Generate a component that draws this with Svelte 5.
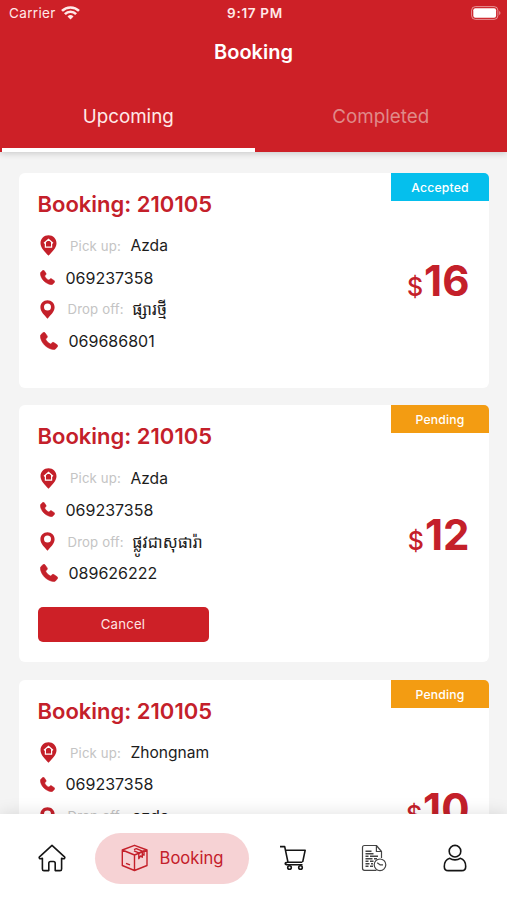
<script lang="ts">
	// Types/constants
	type Booking = {
		id: string
		status: 'Accepted' | 'Pending'
		pickUp: string
		pickUpPhone: string
		dropOff: string
		dropOffPhone: string
		price: number
		canCancel: boolean
	}

	const bookings: Booking[] = [
		{
			id: '210105',
			status: 'Accepted',
			pickUp: 'Azda',
			pickUpPhone: '069237358',
			dropOff: 'ផ្សារថ្មី',
			dropOffPhone: '069686801',
			price: 16,
			canCancel: false,
		},
		{
			id: '210105',
			status: 'Pending',
			pickUp: 'Azda',
			pickUpPhone: '069237358',
			dropOff: 'ផ្លូវជាសុផារ៉ា',
			dropOffPhone: '089626222',
			price: 12,
			canCancel: true,
		},
		{
			id: '210105',
			status: 'Pending',
			pickUp: 'Zhongnam',
			pickUpPhone: '069237358',
			dropOff: 'azda',
			dropOffPhone: '069686801',
			price: 10,
			canCancel: true,
		},
	]

	const tabs = ['Upcoming', 'Completed']


	// State
	let activeTab = $state('Upcoming')
</script>


{#snippet phoneIcon(size: number)}
	<svg class="icon phone" width={size} height={size} viewBox="0 0 16 16" aria-hidden="true">
		<path d="M.9 2.300 2.800.500c.5-.4 1.200-.4 1.600.1l2 2.900c.3.500.2 1.100-.2 1.500L5 6.300c.8 1.900 2.300 3.500 4.500 4.400l1.300-1.200c.5-.4 1-.4 1.500-.1l3 2c.5.400.6 1.100.2 1.600l-1.700 2c-.5.500-1.200.7-2 .6C5.900 14.700 1.100 9.900.3 4c0-.7.1-1.300.6-1.700Z" />
	</svg>
{/snippet}


<div class="screen">
	<header>
		<div class="status-bar">
			<span class="carrier">
				Carrier
				<svg width="19" height="14" viewBox="0 0 19 14" aria-hidden="true">
					<g fill="none" stroke="currentColor" stroke-width="2.6">
						<path d="M1 4.900a12.200 12.200 0 0 1 17 0" />
						<path d="M3.900 8.100a8 8 0 0 1 11.200 0" />
					</g>
					<path fill="currentColor" d="M6.500 10.400a4.300 4.300 0 0 1 6 0L9.500 13.500Z" />
				</svg>
			</span>
			<span class="time">9:17 PM</span>
			<svg class="battery" width="30" height="14" viewBox="0 0 30 14" aria-hidden="true">
				<rect x=".6" y=".6" width="26.300" height="12.800" rx="3.800" fill="none" stroke="#fff" stroke-opacity=".5" />
				<rect x="2.300" y="2.300" width="22.800" height="9.400" rx="2" fill="#fff" />
				<path d="M28.200 4.900c1.700.7 1.700 3.500 0 4.200Z" fill="#fff" fill-opacity=".5" />
			</svg>
		</div>

		<h1>Booking</h1>

		<div class="tabs" role="tablist">
			{#each tabs as tab}
				<button
					type="button"
					role="tab"
					class:active={tab === activeTab}
					aria-selected={tab === activeTab}
					onclick={() => {
						activeTab = tab
					}}
				>
					{tab}
				</button>
			{/each}
		</div>
	</header>

	<main>
		{#each bookings as booking}
			<article>
				<div class="details">
					<h2>Booking: {booking.id}</h2>

					<div class="row pick-up">
						<svg class="icon" width="17" height="21" viewBox="0 0 17 21" aria-hidden="true">
							<path d="M8.500.3C4 .3.500 3.800.500 8.200c0 4.800 4.900 9 8 12.500 3.100-3.500 8-7.700 8-12.500C16.500 3.800 13 .3 8.500.3Z" />
							<path d="m4 8.200 4.500-4 4.500 4M5.400 7.500v4.600h6.200V7.500" fill="none" stroke="#fff" stroke-width="1.200" />
						</svg>
						<span class="label">Pick up:</span>
						<span class="place">{booking.pickUp}</span>
					</div>
					<div class="row pick-up-phone">
						{@render phoneIcon(15)}
						<span>{booking.pickUpPhone}</span>
					</div>
					<div class="row drop-off">
						<svg class="icon" width="15" height="19" viewBox="0 0 15 19" aria-hidden="true">
							<path fill-rule="evenodd" d="M7.500.3C3.400.3.400 3.300.400 7.200c0 4.500 4.300 8 7.100 11.500 2.800-3.500 7.100-7 7.100-11.500C14.600 3.300 11.600.3 7.500.3Zm0 3.300a3.500 3.500 0 1 1 0 7 3.500 3.500 0 0 1 0-7Z" />
						</svg>
						<span class="label">Drop off:</span>
						<span class="place">{booking.dropOff}</span>
					</div>
					<div class="row drop-off-phone">
						{@render phoneIcon(18)}
						<span>{booking.dropOffPhone}</span>
					</div>

					{#if booking.canCancel}
						<button type="button" class="cancel">Cancel</button>
					{/if}
				</div>

				<div class="price"><small>$</small>{booking.price}</div>
				<span class="badge {booking.status.toLowerCase()}">{booking.status}</span>
			</article>
		{/each}
	</main>

	<nav>
		<a href="#home" aria-label="Home">
			<svg width="28" height="28" viewBox="0 0 28 28" aria-hidden="true">
				<path d="M14 1.300 1.500 12.800c-.8 1 .2 2.300 1.300 1.900l1.600-.5v10.700c0 1 .6 1.700 1.600 1.700h4.800v-7.300c0-1.200.6-1.800 1.700-1.800h3c1.100 0 1.700.6 1.700 1.800v7.300H22c1 0 1.600-.7 1.600-1.700V14.200l1.600.5c1.100.4 2.100-.9 1.300-1.900Z" />
			</svg>
		</a>
		<a href="#booking" class="current">
			<svg width="28" height="28" viewBox="0 0 28 28" aria-hidden="true">
				<path d="M13.500 1.300 26 6v15.500L13.500 26.500 1.300 21.500V6ZM1.300 6l12.200 5L26 6M13.500 11v15.500M5 19.300l4 1.600" />
				<path d="m13 5.600 2.300-.9 6 2.500v6l-1.700-1.300-1.800 2.800V8.900L13 6.800M17.800 8.900 23 6.800v4.400l-1.700-.9" />
			</svg>
			Booking
		</a>
		<a href="#cart" aria-label="Cart">
			<svg width="28" height="28" viewBox="0 0 28 28" aria-hidden="true">
				<path d="M1 2.600h4.700l3.300 15.700h14.400M6.500 6.200h19.700l-2.500 11.600M8.500 18.300c-3 0-3 2.500 0 2.500h15" />
				<circle cx="10.500" cy="23.500" r="1.800" />
				<circle cx="21.500" cy="23.500" r="1.800" />
			</svg>
		</a>
		<a href="#history" class="history" aria-label="History">
			<svg width="28" height="28" viewBox="0 0 28 28" aria-hidden="true">
				<path d="M21.500 14V7.500L16.400 1.500H4.500c-1.200 0-2 .8-2 2v20.800c0 1.200.8 2 2 2h12M16.400 1.500v6h5.100" />
				<path d="M5.500 7.200h6M5.500 9.700h8M5.500 12.200h3m1.500 0h8M5.500 14.700h7m1.500 0h3M5.500 17.200h3m1.500 0h3.500M5.500 19.700h4m1.500 0h2M5.500 22.200h3m1.500 0h3" stroke-width="1.400" />
				<circle cx="20" cy="20.800" r="5.800" />
				<path d="m17.200 18.800 2.800 2h3" />
			</svg>
		</a>
		<a href="#profile" aria-label="Profile">
			<svg width="28" height="28" viewBox="0 0 28 28" aria-hidden="true">
				<circle cx="14" cy="7.200" r="5.800" />
				<path d="M8.800 14.300c-3.600 1.100-5.500 4.200-5.500 8.100 0 2.700 1.200 4.200 3.900 4.200h13.600c2.700 0 3.900-1.500 3.900-4.200 0-3.900-1.900-7-5.500-8.100-2.800 2.100-7.600 2.100-10.400 0Z" />
			</svg>
		</a>
	</nav>
</div>


<style>
	:global(body) {
		margin: 0;
	}

	.screen {
		display: flex;
		flex-direction: column;
		height: 900px;
		overflow: hidden;
		background: #f4f4f4;
		color: #1c1c1c;
		font-family: Inter, 'Noto Sans Khmer', 'Noto Sans', sans-serif;
	}

	button {
		padding: 0;
		border: 0;
		font: inherit;
	}

	header {
		z-index: 1;
		display: flex;
		flex-direction: column;
		flex: none;
		height: 152px;
		background: #cd2027;
		box-shadow: 0 1px 7px rgba(0, 0, 0, 0.2);
		color: #fff;
	}

	.status-bar {
		display: grid;
		grid-template-columns: 1fr auto 1fr;
		align-items: center;
		height: 26px;
		padding: 0 6px 0 9px;
		font-size: 13.5px;
		color: #ffe9e8;
	}

	.carrier {
		display: flex;
		align-items: center;
		gap: 5px;
		letter-spacing: 0.35px;
	}

	.time {
		font-size: 13.5px;
		font-weight: 600;
		letter-spacing: 0.7px;
	}

	.battery {
		justify-self: end;
	}

	h1 {
		margin: 0;
		font-size: 20px;
		font-weight: 600;
		line-height: 53px;
		text-align: center;
	}

	.tabs {
		display: flex;
		flex: 1;

		button {
			flex: 1;
			padding-top: 6px;
			border-bottom: 4px solid transparent;
			background: none;
			color: #e08a89;
			font-size: 18.8px;
		}

		.active {
			margin: 0 0 0 2px;
			border-bottom-color: #fff;
			border-radius: 2px 2px 0 0;
			color: #ffe9e8;
		}
	}

	main {
		display: flex;
		flex-direction: column;
		flex: 1;
		gap: 17.5px;
		min-height: 0;
		padding: 21px 18px 0 19px;
		overflow: hidden;
	}

	article {
		position: relative;
		display: flex;
		align-items: center;
		justify-content: space-between;
		flex: none;
		border-radius: 6px;
		background: #fff;
	}

	.details {
		padding: 18px 0 30.5px 18.5px;

		&:has(.cancel) {
			padding-bottom: 20.3px;
		}
	}

	h2 {
		margin: 0 0 12px;
		color: #c4202a;
		font-size: 22px;
		font-weight: 630;
		line-height: 27px;
	}

	.row {
		display: flex;
		align-items: center;
		height: 31.8px;
		padding-left: 2px;
		font-size: 16px;
	}

	.icon {
		flex: none;
		fill: #c4202a;
	}

	.phone {
		stroke: #c4202a;
		stroke-width: 0.5;
	}

	.label {
		color: #c4c4c4;
		font-size: 13.2px;
		letter-spacing: 0.15px;
	}

	.place {
		font-size: 15.6px;
	}

	.pick-up {
		.icon {
			margin-right: 13.5px;
		}

		.label {
			margin-right: 9.5px;
		}
	}

	.pick-up-phone .icon {
		margin-right: 11px;
	}

	.drop-off {
		.icon {
			margin-right: 13px;
		}

		.label {
			margin-right: 8.5px;
		}

		.place {
			font-size: 16.2px;
		}
	}

	.drop-off-phone .icon {
		margin-right: 11px;
	}

	.cancel {
		display: block;
		width: 171px;
		height: 35px;
		margin-top: 17.5px;
		border-radius: 5px;
		background: #cd2027;
		color: #ffe4e3;
		font-size: 13.2px;
		letter-spacing: 0.2px;
	}

	.price {
		padding: 8px 19.5px 0 0;
		color: #c4202a;
		font-size: 42px;
		font-weight: 700;
		line-height: 50px;

		small {
			margin-right: 1px;
			font-size: 25px;
			font-weight: 500;
		}
	}

	.badge {
		position: absolute;
		top: 0;
		right: 0;
		width: 98px;
		height: 28px;
		border-top-right-radius: 5px;
		color: #fff;
		font-size: 12.2px;
		font-weight: 500;
		letter-spacing: 0.2px;
		line-height: 29px;
		text-align: center;
	}

	.accepted {
		background: #05bfed;
	}

	.pending {
		background: #f39c12;
	}

	nav {
		z-index: 1;
		display: flex;
		align-items: center;
		flex: none;
		height: 86px;
		padding: 2px 11px 0;
		box-sizing: border-box;
		background: #fff;
		box-shadow: 0 0 16px rgba(0, 0, 0, 0.13);

		a {
			display: flex;
			align-items: center;
			justify-content: center;
			width: 81px;
			color: #151515;
			text-decoration: none;
		}

		svg {
			flex: none;
			fill: none;
			stroke: currentColor;
			stroke-width: 1.6;
			stroke-linejoin: round;
		}

		.current {
			gap: 11px;
			width: 154px;
			height: 51px;
			margin: 0 3px;
			border-radius: 26px;
			background: #f6d2d4;
			color: #c4202a;
			font-size: 16.6px;

			svg {
				stroke-width: 1.4;
			}
		}

		.history {
			color: #444;

			svg {
				stroke-width: 1.2;
			}
		}
	}
</style>
